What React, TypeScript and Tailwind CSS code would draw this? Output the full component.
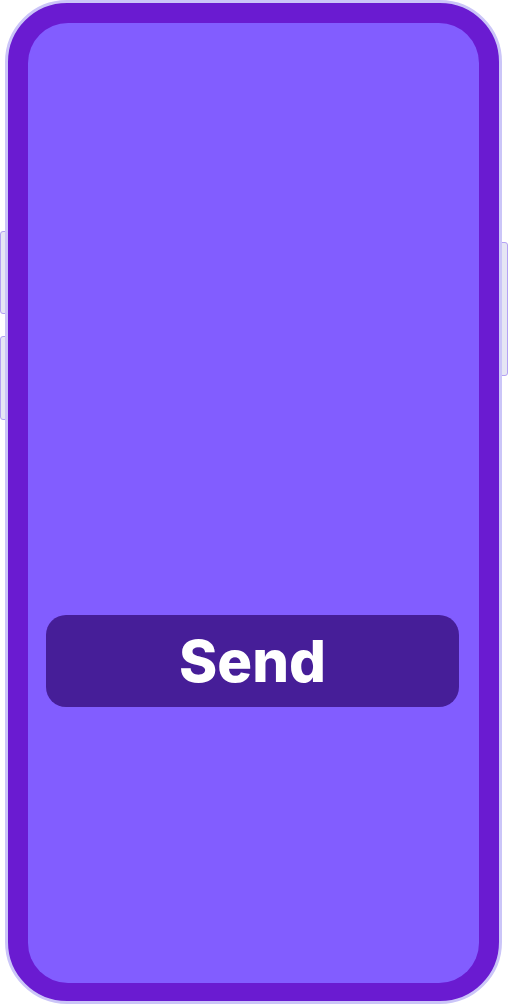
import React from "react";

export default function App() {
  return (
    <div className="relative w-[508px] h-[1006px] bg-white overflow-hidden">
      {/* side buttons (behind the frame) */}
      <div className="absolute left-0 top-[231px] w-[12px] h-[83px] rounded-l-[3px] bg-[#e6e6f4] border border-[#b4a2f4]" />
      <div className="absolute left-0 top-[336px] w-[12px] h-[84px] rounded-l-[3px] bg-[#e6e6f4] border border-[#b4a2f4]" />
      <div className="absolute left-[496px] top-[242px] w-[12px] h-[134px] rounded-r-[3px] bg-[#e6e6f4] border border-[#b4a2f4]" />

      <div className="relative ml-[5px] w-[497px] h-[1004px] rounded-[62px] border-[3px] border-[#cbc5f8] bg-[#6a1bd1] px-[20px] pt-[20px] pb-[18px]">
        <div className="h-full rounded-[40px] bg-[#825dff] flex flex-col pt-[592px] pl-[18px] pr-[20px]">
          <button className="h-[92px] w-full rounded-[20px] bg-[#461e98] flex items-center justify-center">
            <span
              className="text-white text-[58px] font-extrabold leading-none tracking-[0px]"
              style={{ fontFamily: "Inter, 'Open Sans', sans-serif" }}
            >
              Send
            </span>
          </button>
        </div>
      </div>
    </div>
  );
}
